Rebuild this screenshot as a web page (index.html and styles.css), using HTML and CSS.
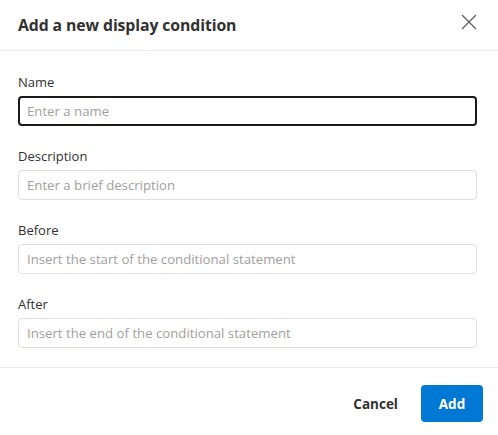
FILE: index.html
```html
<!DOCTYPE html>
<html>
<head>
<meta charset="utf-8">
<link rel="stylesheet" href="styles.css">
</head>
<body>
<div class="dialog">
  <div class="header">
    <h1 class="title">Add a new display condition</h1>
    <button class="close" aria-label="Close">
      <svg width="16" height="16" viewBox="0 0 16 16"><path d="M1 1 L15 15 M15 1 L1 15" stroke="#605e5c" stroke-width="1.3" fill="none"/></svg>
    </button>
  </div>
  <div class="content">
    <div class="field">
      <label class="label">Name</label>
      <input class="input focused" placeholder="Enter a name">
    </div>
    <div class="field">
      <label class="label">Description</label>
      <input class="input" placeholder="Enter a brief description">
    </div>
    <div class="field">
      <label class="label">Before</label>
      <input class="input" placeholder="Insert the start of the conditional statement">
    </div>
    <div class="field">
      <label class="label">After</label>
      <input class="input" placeholder="Insert the end of the conditional statement">
    </div>
  </div>
  <div class="footer">
    <button class="btn cancel">Cancel</button>
    <button class="btn primary">Add</button>
  </div>
</div>
</body>
</html>
```

FILE: styles.css
```css
html, body {
  margin: 0;
  padding: 0;
  background: #ffffff;
}
body {
  font-family: "Open Sans", "Noto Sans", sans-serif;
  color: #323130;
}
.dialog {
  width: 498px;
  height: 435px;
  display: flex;
  flex-direction: column;
}
.header {
  height: 51px;
  border-bottom: 1px solid #edebe9;
  display: flex;
  align-items: center;
  justify-content: space-between;
  padding: 0 21px 0 18px;
  box-sizing: border-box;
}
.title {
  margin: 0;
  margin-top: -1px;
  font-size: 15.8px;
  font-weight: 700;
  color: #323130;
  letter-spacing: -0.1px;
}
.close {
  border: 0;
  background: none;
  padding: 0;
  width: 16px;
  height: 16px;
  display: flex;
  margin-top: -6px;
}
.content {
  padding: 21px 21px 19px 18px;
  display: flex;
  flex-direction: column;
  gap: 20px;
  border-bottom: 1px solid #edebe9;
}
.field {
  display: flex;
  flex-direction: column;
  gap: 4px;
}
.label {
  font-size: 13px;
  line-height: 20px;
  color: #323130;
}
.input {
  height: 30px;
  box-sizing: border-box;
  border: 1px solid #e1dfdd;
  border-radius: 4px;
  padding: 0 8px;
  font-family: "Open Sans", "Noto Sans", sans-serif;
  font-size: 13.2px;
  color: #323130;
  outline: none;
}
.input::placeholder {
  color: #a19f9d;
}
.input.focused {
  border: 2px solid #1b1a19;
  padding: 0 7px;
}
.footer {
  flex: 1;
  display: flex;
  align-items: flex-start;
  justify-content: flex-end;
  gap: 7px;
  padding: 17px 15px 0 0;
}
.btn {
  height: 37px;
  border-radius: 4px;
  font-family: "Open Sans", "Noto Sans", sans-serif;
  font-size: 13.5px;
  font-weight: 700;
  border: 0;
  padding: 0 16px;
}
.cancel {
  background: none;
  color: #323130;
}
.primary {
  background: #0078d4;
  color: #ffffff;
  width: 62px;
}
```
